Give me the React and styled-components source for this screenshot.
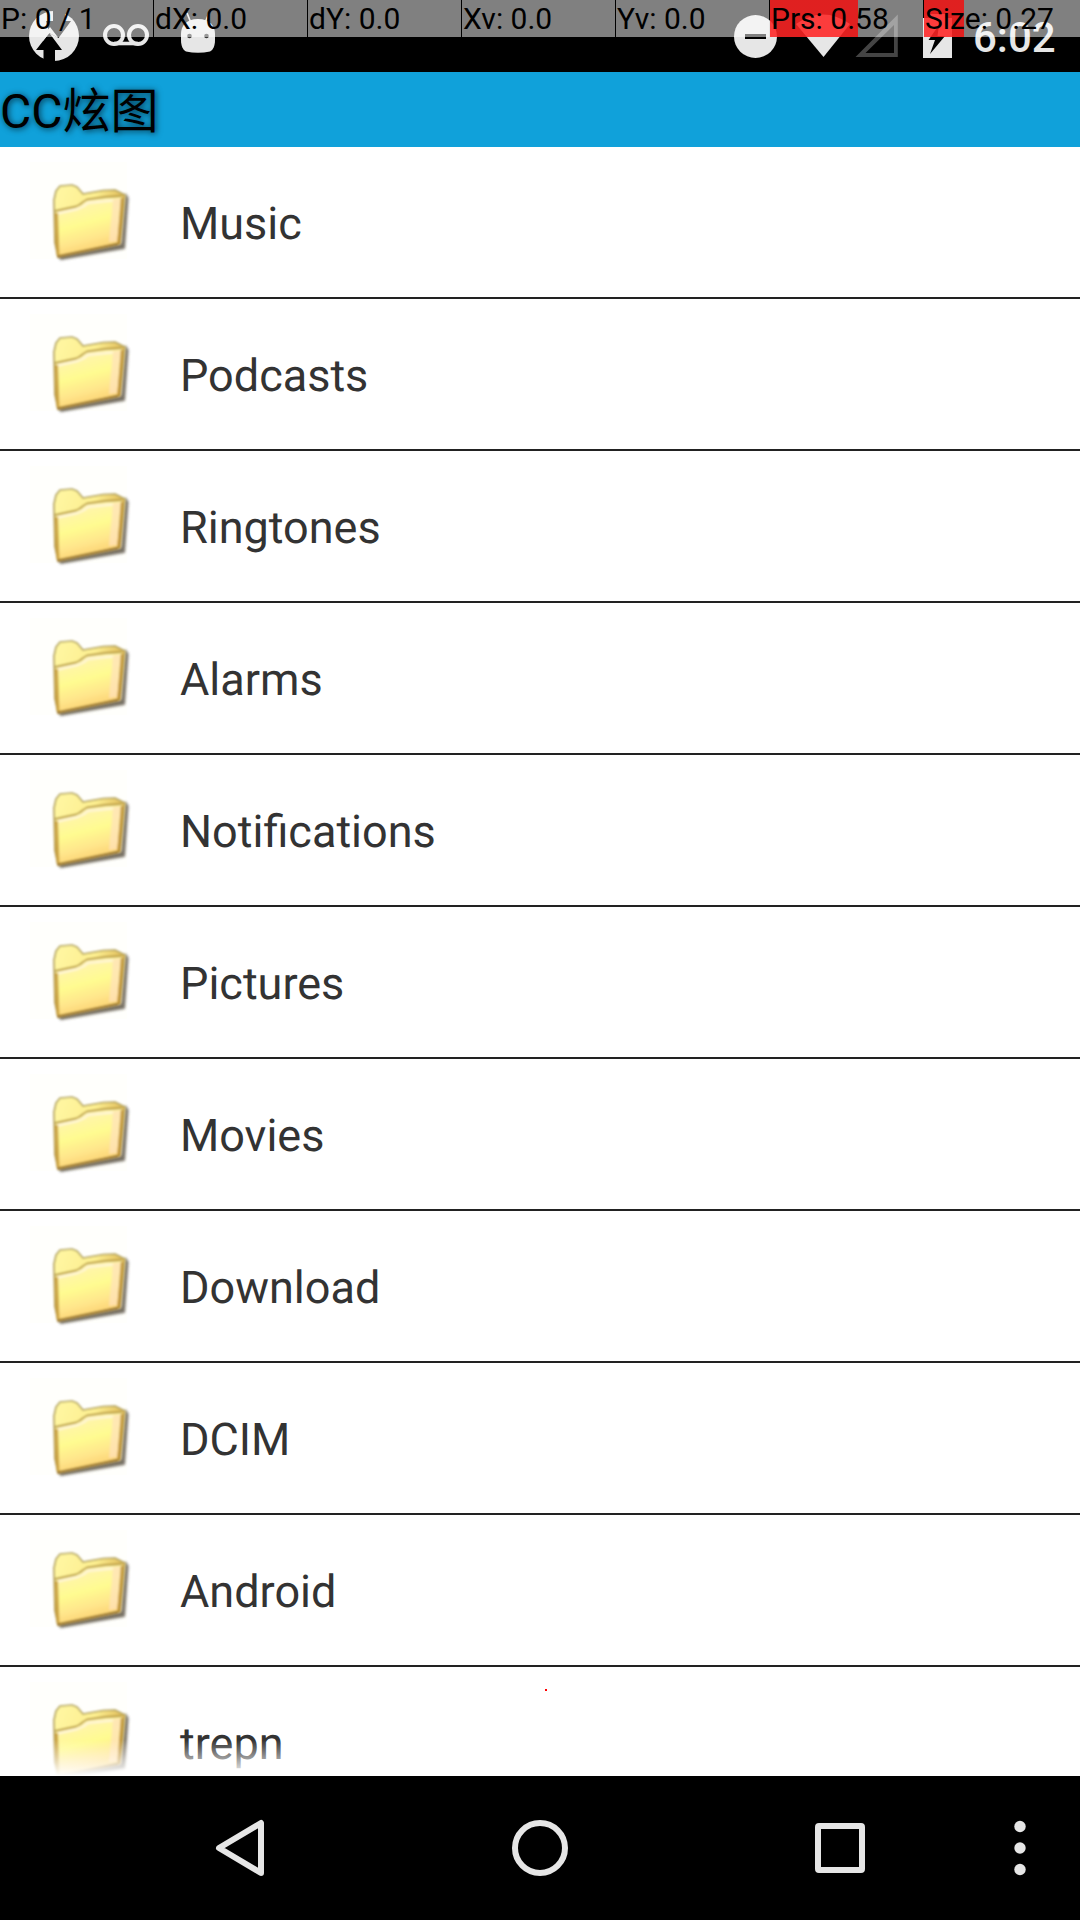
import React from "react";
import styled, { createGlobalStyle } from "styled-components";

const GlobalStyle = createGlobalStyle`
  html, body { margin: 0; padding: 0; background: #000; }
  body { font-family: Roboto, "Noto Sans CJK SC", sans-serif; }
  * { box-sizing: border-box; }
`;

const Screen = styled.div`
  position: relative;
  display: flex;
  flex-direction: column;
  width: 1080px;
  height: 1920px;
  overflow: hidden;
  background: #000;
`;

const StatusBar = styled.header`
  position: relative;
  display: flex;
  justify-content: space-between;
  flex: none;
  height: 72px;
  padding: 0 24px 0 28px;
  background: #000;
`;

const StatusGroup = styled.div`
  display: flex;
  align-items: flex-start;
  gap: ${(p) => p.$gap}px;
`;

const StatusIcon = styled.svg`
  display: block;
  flex: none;
  fill: #e6e6e6;
`;

const Clock = styled.span`
  width: 83px;
  margin-left: 20px;
  padding-top: 16px;
  color: #e6e6e6;
  font-size: 42px;
  font-weight: 500;
  line-height: 44px;
  white-space: nowrap;
`;

const PointerBar = styled.div`
  position: absolute;
  inset: 0 0 auto 0;
  display: flex;
  gap: 1px;
  height: 37px;
`;

const PointerCell = styled.div`
  flex: none;
  width: ${(p) => p.$width}px;
  padding-left: 1px;
  color: #000;
  font-size: 30px;
  line-height: 37px;
  white-space: pre;
  background:
    linear-gradient(rgba(255, 0, 0, 0.753), rgba(255, 0, 0, 0.753)) 0 0 /
      ${(p) => p.$level}px 100% no-repeat,
    rgba(255, 255, 255, 0.502);
`;

const TitleBar = styled.h1`
  flex: none;
  height: 75px;
  margin: 0;
  background: #10a1da;
  color: #000;
  font-size: 48px;
  font-weight: 400;
  line-height: 79px;
  text-shadow: 1px 1px 6px rgba(0, 0, 0, 0.7);
`;

const FileList = styled.ul`
  position: relative;
  flex: 1;
  min-height: 0;
  margin: 0;
  padding: 0;
  overflow: hidden;
  list-style: none;
  background: #fff;

  &::after {
    content: "";
    position: absolute;
    inset: auto 0 0 0;
    height: 36px;
    background: linear-gradient(rgba(255, 255, 255, 0), #fff);
  }
`;

const FileRow = styled.li`
  display: flex;
  align-items: center;
  gap: 30px;
  height: 152px;
  padding: 0 30px;
  border-bottom: 2px solid #222;
`;

const FileName = styled.span`
  padding-top: 3px;
  color: #333;
  font-size: 45px;
  line-height: 53px;
  text-rendering: geometricPrecision;
`;

const FolderSvg = styled.svg`
  display: block;
  flex: none;
  width: 120px;
  height: 120px;
`;

const TouchPoint = styled.i`
  position: absolute;
  left: 545px;
  top: 1689px;
  width: 2px;
  height: 2px;
  background: #f00;
`;

const NavBar = styled.nav`
  display: flex;
  flex: none;
  align-items: center;
  height: 144px;
  padding-left: 90px;
  background: #000;
`;

const NavButton = styled.button`
  display: flex;
  justify-content: center;
  width: ${(p) => p.$width}px;
  padding: 0;
  border: 0;
  background: none;

  svg {
    display: block;
    fill: none;
    stroke: #e6e6e6;
    stroke-width: 6;
    stroke-linejoin: round;
  }
`;

const folders = [
  "Music", "Podcasts", "Ringtones", "Alarms", "Notifications", "Pictures",
  "Movies", "Download", "DCIM", "Android", "trepn",
];

const pointerCells = [
  { text: "P: 0 / 1", width: 153 },
  { text: "dX: 0.0", width: 153 },
  { text: "dY: 0.0", width: 153 },
  { text: "Xv: 0.0", width: 153 },
  { text: "Yv: 0.0", width: 153 },
  { text: "Prs: 0.58", width: 153, level: 88 },
  { text: "Size: 0.27", width: 156, level: 40 },
];

function FolderDefs() {
  return (
    <svg width="0" height="0" style={{ position: "absolute" }} aria-hidden="true">
      <defs>
        <linearGradient id="folderFront" x1="0.3" y1="0" x2="0.6" y2="1">
          <stop offset="0" stopColor="#fff2b8" />
          <stop offset="0.45" stopColor="#fffb90" />
          <stop offset="0.7" stopColor="#ffe68c" />
          <stop offset="1" stopColor="#fbcb68" />
        </linearGradient>
        <linearGradient id="folderBack" x1="0" y1="0" x2="1" y2="0.4">
          <stop offset="0" stopColor="#fff7a4" />
          <stop offset="0.55" stopColor="#fdef90" />
          <stop offset="1" stopColor="#d6ab48" />
        </linearGradient>
        <linearGradient id="folderEdge" x1="0" y1="0" x2="0" y2="1">
          <stop offset="0" stopColor="#b5a764" />
          <stop offset="1" stopColor="#b08a34" />
        </linearGradient>
        <filter id="folderShade" x="-20%" y="-20%" width="140%" height="140%">
          <feGaussianBlur stdDeviation="1.8" />
        </filter>
        <filter id="folderSoft" x="-10%" y="-10%" width="120%" height="120%">
          <feGaussianBlur stdDeviation="1" />
        </filter>
      </defs>
    </svg>
  );
}

function FolderIcon() {
  return (
    <FolderSvg viewBox="0 0 120 120">
      <rect x="0" y="0" width="97" height="97" fill="#fffffc" />
      <path d="M30 95 L92 82.5 L96 34 L97.5 36 L94 86 L31 97 Z" fill="#4a4030" stroke="#4a4030" strokeWidth="2" opacity="0.75" filter="url(#folderShade)" />
      <g filter="url(#folderSoft)" strokeLinejoin="round">
        <path d="M24 38 L26 29 L30 24 L42 23 L47 25 L53 32 L73 28.5 L85 28 L95 33 L94 45 L90 82 L28 95 L25 80 Z" fill="url(#folderBack)" stroke="url(#folderEdge)" strokeWidth="1.7" />
        <path d="M26 49 L46 44.5 Q50 43 53 40 L57 37.5 L92 35 L87 81 L28 94 Z" fill="url(#folderFront)" />
        <path d="M25 49 L46 44.5 Q50 43 53 40 L57 37.5 L75 35 L92 34" fill="none" stroke="#bda24a" strokeWidth="1.8" />
        <path d="M83 37.5 L91 36.5 L87 79 L79 80 Z" fill="#ffe2ba" opacity="0.75" />
        <path d="M28 51.5 L48 47 Q54 45 58 41 L83 38.5" fill="none" stroke="#fff5da" strokeWidth="1.8" />
        <path d="M28 94.5 L88 82" fill="none" stroke="#98742a" strokeWidth="2.4" />
        <path d="M26.5 51 L28 93" fill="none" stroke="#cda544" strokeWidth="3" />
        <path d="M92 36 L88.5 81" fill="none" stroke="#c4993c" strokeWidth="2.4" />
      </g>
    </FolderSvg>
  );
}

export default function App() {
  return (
    <Screen>
      <GlobalStyle />
      <FolderDefs />
      <StatusBar>
        <StatusGroup $gap={20}>
          <StatusIcon width="54" height="72" viewBox="28 0 54 72">
            <circle cx="54" cy="36" r="25" />
            <path fill="#000" d="M53 9H65V21H71L58.5 38L49.3 33L46 21H53Z M36 50L49.3 33L62 50H55V63H43.5V50Z" />
            <path d="M49.3 33L58.5 38L50 27L40 40L43 41Z" />
            <path d="M49 11.5H53V21H47V14Z" />
          </StatusIcon>
          <StatusIcon width="58" height="72" viewBox="102 0 58 72">
            <g fill="none" stroke="#e6e6e6" strokeWidth="4">
              <circle cx="114" cy="35" r="9" />
              <circle cx="138" cy="35" r="9" />
              <path d="M114 43.5H138" strokeWidth="3.6" />
            </g>
          </StatusIcon>
          <StatusIcon width="36" height="72" viewBox="180 0 36 72">
            <path d="M181 34C181 26 186 19 198 19S215 26 215 34V40C215 46 213 50 210 51.5Q198 54 186 51.5C183 50 181 46 181 40Z" />
            <path d="M187 13L191 23M209 13L205 23" stroke="#e6e6e6" strokeWidth="1.7" />
            <circle cx="189.5" cy="36" r="2.3" fill="#333" />
            <circle cx="206.5" cy="36" r="2.3" fill="#333" />
          </StatusIcon>
        </StatusGroup>
        <StatusGroup $gap={0}>
          <StatusIcon width="220" height="72" viewBox="733 0 220 72">
            <circle cx="755.5" cy="36.5" r="21.5" />
            <rect x="745" y="34" width="21" height="5" fill="#000" />
            <path d="M796 24Q823 5 850 24L823.5 57Z" />
            <path d="M897.8 14.5V57H855.5ZM894 25L865.5 53H894Z" fill="#444" fillRule="evenodd" />
            <path d="M923 18H930V14H945V18H952V58H923ZM939 25L928.5 40H935L930 54L945 36H937.5Z" fillRule="evenodd" />
          </StatusIcon>
          <Clock>6:02</Clock>
        </StatusGroup>
        <PointerBar>
          {pointerCells.map((cell) => (
            <PointerCell key={cell.text} $width={cell.width} $level={cell.level || 0}>
              {cell.text}
            </PointerCell>
          ))}
        </PointerBar>
      </StatusBar>
      <TitleBar>CC炫图</TitleBar>
      <FileList>
        {folders.map((name) => (
          <FileRow key={name}>
            <FolderIcon />
            <FileName>{name}</FileName>
          </FileRow>
        ))}
      </FileList>
      <NavBar>
        <NavButton $width={300} aria-label="Back">
          <svg width="50" height="58" viewBox="0 0 50 58"><path d="M46 4V54L4 29Z" /></svg>
        </NavButton>
        <NavButton $width={300} aria-label="Home">
          <svg width="58" height="58" viewBox="0 0 58 58"><circle cx="29" cy="29" r="25" /></svg>
        </NavButton>
        <NavButton $width={300} aria-label="Recent apps">
          <svg width="50" height="50" viewBox="0 0 50 50"><rect x="3" y="3" width="44" height="44" rx="1" /></svg>
        </NavButton>
        <NavButton $width={59} aria-label="More options">
          <svg width="12" height="56" viewBox="0 0 12 56">
            <g fill="#e6e6e6" stroke="none">
              <circle cx="6" cy="6.5" r="5.7" />
              <circle cx="6" cy="28" r="5.7" />
              <circle cx="6" cy="49.5" r="5.7" />
            </g>
          </svg>
        </NavButton>
      </NavBar>
      <TouchPoint />
    </Screen>
  );
}
